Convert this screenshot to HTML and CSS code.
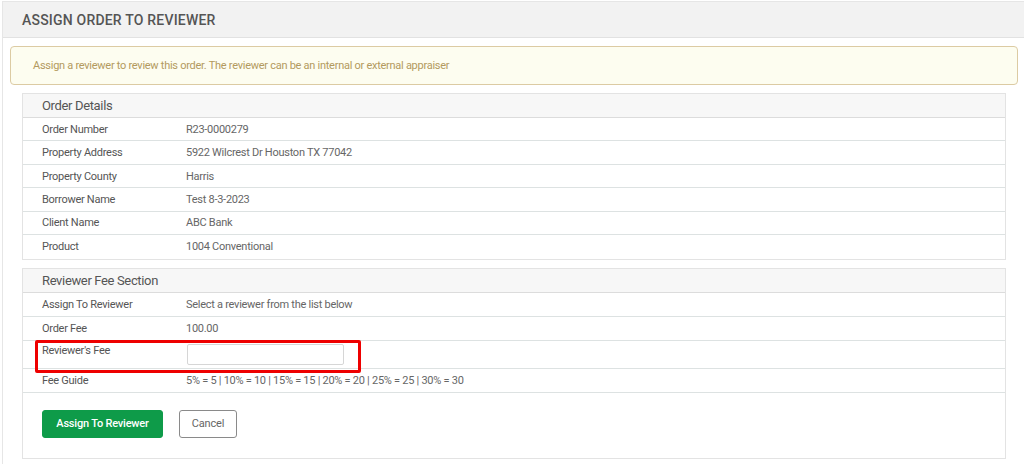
FILE: index.html
```html
<!DOCTYPE html>
<html>
<head>
<meta charset="utf-8">
<link rel="stylesheet" href="styles.css">
</head>
<body>
<div class="page">
  <div class="page-head">Assign Order To Reviewer</div>
  <div class="page-body">
    <div class="alert">Assign a reviewer to review this order. The reviewer can be an internal or external appraiser</div>

    <div class="panel panel-order">
      <div class="panel-head">Order Details</div>
      <div class="row"><div class="lbl">Order Number</div><div class="val">R23-0000279</div></div>
      <div class="row"><div class="lbl">Property Address</div><div class="val">5922 Wilcrest Dr Houston TX 77042</div></div>
      <div class="row"><div class="lbl">Property County</div><div class="val">Harris</div></div>
      <div class="row"><div class="lbl">Borrower Name</div><div class="val">Test 8-3-2023</div></div>
      <div class="row"><div class="lbl">Client Name</div><div class="val">ABC Bank</div></div>
      <div class="row"><div class="lbl">Product</div><div class="val">1004 Conventional</div></div>
    </div>

    <div class="panel panel-fee">
      <div class="panel-head">Reviewer Fee Section</div>
      <div class="row"><div class="lbl">Assign To Reviewer</div><div class="val">Select a reviewer from the list below</div></div>
      <div class="row"><div class="lbl">Order Fee</div><div class="val">100.00</div></div>
      <div class="row row-input"><div class="lbl">Reviewer's Fee</div><div class="val"><input class="fee-input" type="text"></div><div class="highlight"></div></div>
      <div class="row"><div class="lbl">Fee Guide</div><div class="val">5% = 5 | 10% = 10 | 15% = 15 | 20% = 20 | 25% = 25 | 30% = 30</div></div>
      <div class="actions">
        <button class="btn btn-green">Assign To Reviewer</button>
        <button class="btn btn-plain">Cancel</button>
      </div>
    </div>
  </div>
</div>
</body>
</html>
```

FILE: styles.css
```css
* { box-sizing: border-box; }
html, body { margin: 0; padding: 0; background: #fff; }
body { font-family: Roboto, "Liberation Sans", Arial, sans-serif; color: #555; }

.page {
  margin: 1px 0 0 2px;
  border-left: 1px solid #e6e6e6;
  border-top: 1px solid #e6e6e6;
  min-height: 463px;
}
.page-head {
  height: 36px;
  background: #f2f2f2;
  border-bottom: 1px solid #e2e2e2;
  padding-left: 19px;
  display: flex;
  align-items: center;
  font-size: 14px;
  font-weight: 500;
  text-transform: uppercase;
  color: #555;
  letter-spacing: 0.2px;
}
.page-body {
  padding: 8px 6px 0 7px;
}
.alert {
  height: 39px;
  background: #fdfdf0;
  border: 1px solid #dccba3;
  border-radius: 4px;
  padding-left: 22px;
  display: flex;
  align-items: center;
  font-size: 11px;
  letter-spacing: -0.27px;
  color: #b39a5e;
}
.panel {
  margin: 8px 12px 0 12px;
  border: 1px solid #e3e3e3;
}
.panel + .panel { margin-top: 8px; }
.panel-head {
  height: 24px;
  background: #f7f7f7;
  border-bottom: 1px solid #dcdcdc;
  padding-left: 19px;
  display: flex;
  align-items: center;
  font-size: 13px;
  letter-spacing: -0.35px;
  color: #555;
}
.row {
  position: relative;
  display: grid;
  grid-template-columns: 144px 1fr;
  align-items: center;
  height: 23.5px;
  padding-left: 19px;
  border-bottom: 1px solid #dde2e2;
  font-size: 11px;
  letter-spacing: -0.27px;
}
.panel-order .row { height: 23.45px; }
.panel-fee .row { height: 24px; }
.row:last-child { border-bottom: none; }
.lbl { color: #555; }
.val { color: #666; }
.panel-fee .row-input {
  height: 28px;
  align-items: start;
  padding-top: 3px;
}
.fee-input {
  display: block;
  width: 157px;
  height: 21px;
  border: 1px solid #d6d6d6;
  border-radius: 2px;
  margin: 0 0 0 1px;
  padding: 0 4px;
  font: inherit;
}
.highlight {
  position: absolute;
  left: 12px;
  top: -1px;
  width: 326px;
  height: 33px;
  border: 3px solid #ee0000;
  border-radius: 2px;
  pointer-events: none;
}
.actions {
  height: 65px;
  display: flex;
  align-items: center;
  gap: 16px;
  padding-left: 19px;
  padding-bottom: 3px;
}
.btn {
  height: 28px;
  font-family: inherit;
  font-size: 11px;
  letter-spacing: -0.2px;
  border-radius: 3px;
  cursor: pointer;
}
.btn-green {
  width: 121px;
  background: #0e9b49;
  border: 1px solid #0e9b49;
  color: #fff;
  font-weight: 500;
}
.btn-plain {
  width: 58px;
  background: #fff;
  border: 1px solid #8a8a8a;
  color: #666;
}
```
